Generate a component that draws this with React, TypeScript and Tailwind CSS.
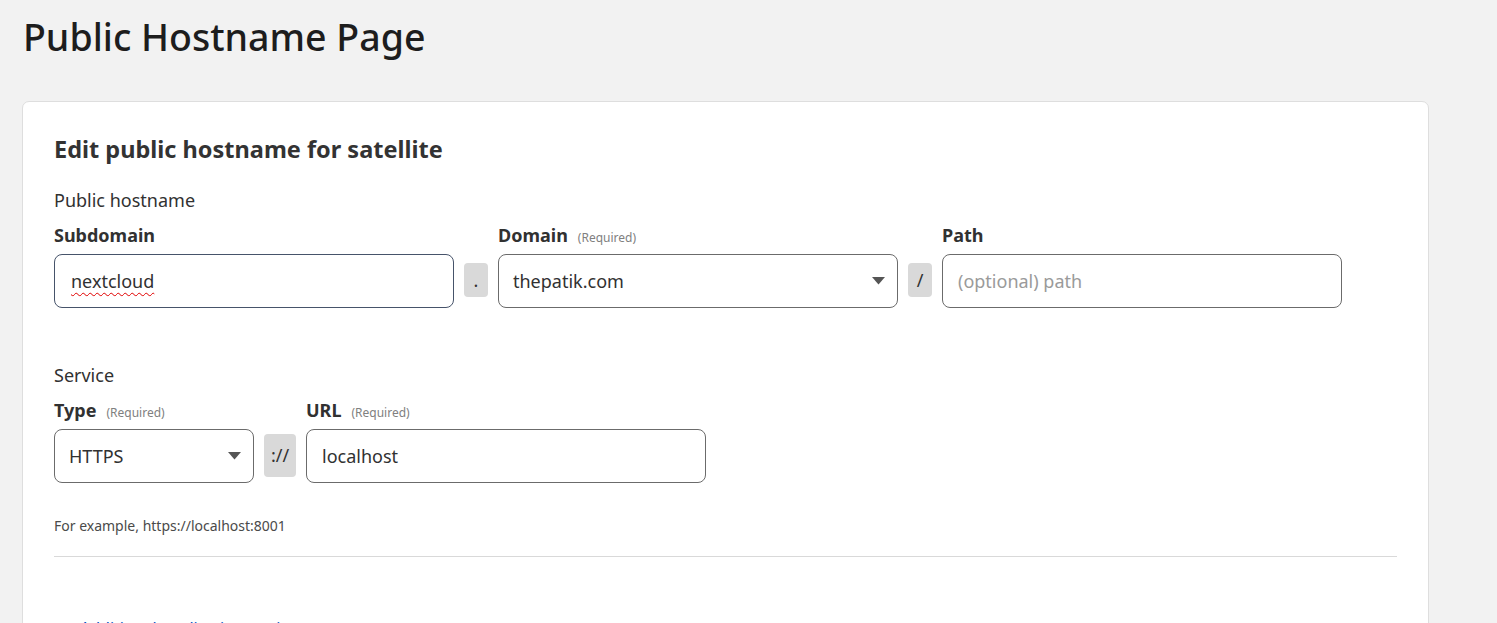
import React from 'react';

const font = { fontFamily: '"Segoe UI", "Noto Sans", "Open Sans", sans-serif' };

function Caret() {
  return (
    <svg width="13" height="8" viewBox="0 0 13 8" className="shrink-0">
      <path d="M0 0 L13 0 L6.5 7.5 Z" fill="#555" />
    </svg>
  );
}

function Sep({ children, tall }: { children: React.ReactNode; tall?: boolean }) {
  return (
    <div
      className={
        'flex shrink-0 items-center justify-center rounded-[4px] bg-[#d9d9d9] text-[18px] text-[#313131] ' +
        (tall ? 'mx-[10px] mt-[36px] h-[43px] w-[32px]' : 'mx-[10px] mt-[40px] h-[34px] w-[24px]')
      }
    >
      {children}
    </div>
  );
}

function Label({ title, required }: { title: string; required?: boolean }) {
  return (
    <div className="flex h-[24px] items-baseline gap-[10px] leading-[24px]">
      <span className="text-[18px] font-bold text-[#313131]">{title}</span>
      {required && <span className="text-[12px] leading-[24px] text-[#808080]">(Required)</span>}
    </div>
  );
}

export default function App() {
  return (
    <div className="min-h-screen overflow-hidden bg-[#f2f2f2]" style={font}>
      <div className="h-[623px] px-[22px] pt-[12px]">
        <h1 className="pl-[1px] text-[37.5px] font-medium leading-[50px] text-[#1d1d1d]">Public Hostname Page</h1>

        <div className="mt-[39px] w-[1407px] rounded-t-[7px] border border-[#dedede] bg-white px-[31px] pt-[31px] pb-[40px]">
          <h2 className="text-[23.5px] font-bold leading-[32px] text-[#333333]">Edit public hostname for satellite</h2>

          <div className="mt-[23px] text-[18px] leading-[24px] text-[#313131]">Public hostname</div>

          <div className="mt-[11px] flex items-start">
            <div className="w-[400px]">
              <Label title="Subdomain" />
              <div className="mt-[7px] flex h-[54px] items-center rounded-[8px] border border-[#46536a] px-[16px] text-[18px] text-[#313131]">
                <span className="underline decoration-[#e00000] decoration-wavy decoration-[1px] underline-offset-[4px]">
                  nextcloud
                </span>
              </div>
            </div>
            <Sep>.</Sep>
            <div className="w-[400px]">
              <Label title="Domain" required />
              <div className="mt-[7px] flex h-[54px] items-center justify-between rounded-[8px] border border-[#6b6b6b] pl-[14px] pr-[12px] text-[18px] text-[#313131]">
                <span>thepatik.com</span>
                <Caret />
              </div>
            </div>
            <Sep>/</Sep>
            <div className="w-[400px]">
              <Label title="Path" />
              <div className="mt-[7px] flex h-[54px] items-center rounded-[8px] border border-[#6b6b6b] px-[15px] text-[18px] text-[#9a9a9a]">
                (optional) path
              </div>
            </div>
          </div>

          <div className="mt-[55px] text-[18px] leading-[24px] text-[#313131]">Service</div>

          <div className="mt-[11px] flex items-start">
            <div className="w-[200px]">
              <Label title="Type" required />
              <div className="mt-[7px] flex h-[54px] items-center justify-between rounded-[8px] border border-[#6b6b6b] pl-[14px] pr-[12px] text-[18px] text-[#313131]">
                <span>HTTPS</span>
                <Caret />
              </div>
            </div>
            <Sep tall>://</Sep>
            <div className="w-[400px]">
              <Label title="URL" required />
              <div className="mt-[7px] flex h-[54px] items-center rounded-[8px] border border-[#6b6b6b] px-[15px] text-[18px] text-[#313131]">
                localhost
              </div>
            </div>
          </div>

          <div className="mt-[33px] text-[14px] leading-[20px] text-[#4a4a4a]">For example, https://localhost:8001</div>

          <div className="mt-[20px] h-px bg-[#d9d9d9]" />

          <div className="mt-[59px] flex items-center gap-[12px] pl-[2px] text-[16px] leading-[24px] text-[#0051c3]">
            <svg width="12" height="12" viewBox="0 0 12 12">
              <path d="M4 2 L8 6 L4 10" fill="none" stroke="#0051c3" strokeWidth="1.5" />
            </svg>
            <span>Additional application settings</span>
          </div>
        </div>
      </div>
    </div>
  );
}
